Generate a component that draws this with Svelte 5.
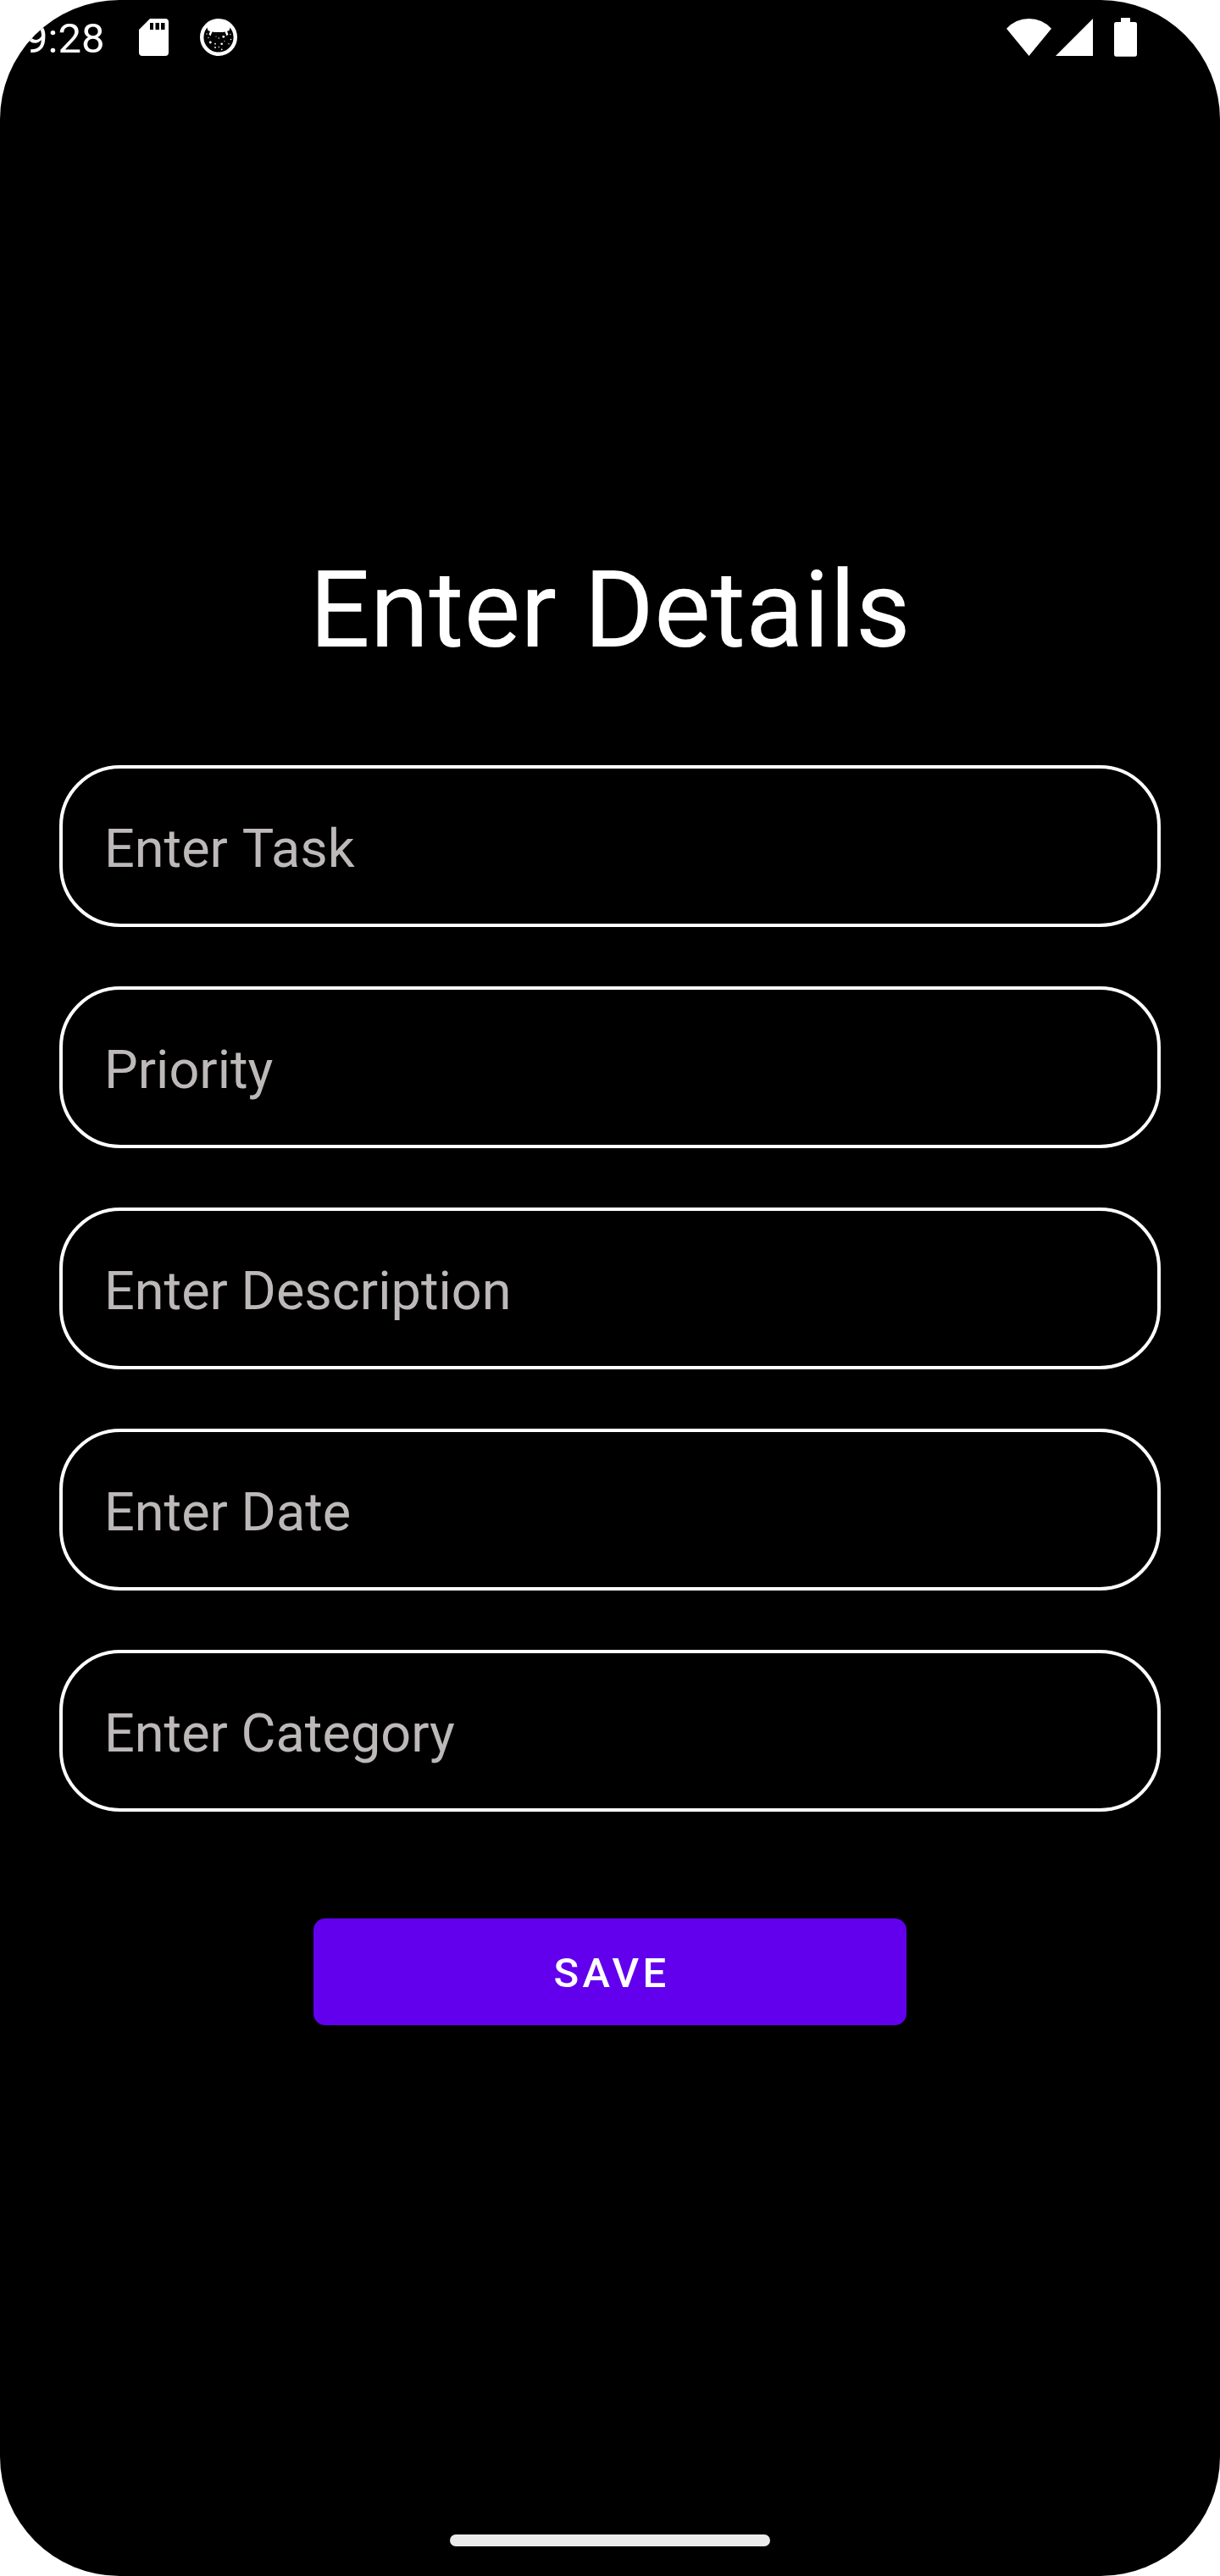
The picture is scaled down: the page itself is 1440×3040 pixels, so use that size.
<script>
  const fields = [
    { label: 'Enter Task', wide: true },
    { label: 'Priority' },
    { label: 'Enter Description' },
    { label: 'Enter Date' },
    { label: 'Enter Category' }
  ];
  const specks = [
    [8, 18, 0.7], [10, 22.5, 0.7], [12.3, 28, 1.4], [18, 29.7, 0.9], [22.3, 23, 0.7], [27.8, 21.3, 1.4],
    [19, 21, 0.6], [25.7, 29.7, 1.3], [34, 29.7, 0.7], [36.5, 24.5, 0.8], [29, 26.5, 0.6], [18, 34, 0.9],
    [25.7, 36.3, 0.9], [36, 18.5, 0.7], [22.3, 33.5, 0.7]
  ];
</script>

<div class="screen">
  <header class="status">
    <span class="clock">9:28</span>
    <svg class="sd" viewBox="0 0 35 44" aria-hidden="true">
      <path fill="#fff" fill-rule="evenodd" d="M13 0H31Q35 0 35 4V40Q35 44 31 44H4Q0 44 0 40V13ZM13 5V13H17V5ZM19.5 5V13H24V5ZM26 5V13H30.5V5Z" />
    </svg>
    <svg class="face" viewBox="0 0 44 44" aria-hidden="true">
      <circle cx="22" cy="22" r="19.8" fill="none" stroke="#fff" stroke-width="4.4" />
      <path fill="#fff" d="M8 9L13 4Q22 -1 31 4L36 9L34.5 14L32 15L33.5 18.5L31.5 20.5L29.5 15.5L27 16H17L14.5 15.5L12.5 20.5L10.5 18.5L12 15L9.5 14Z" />
      {#each specks as [x, y, r]}
        <circle cx={x} cy={y} {r} fill="#fff" />
      {/each}
    </svg>
    <span class="spacer"></span>
    <svg class="wifi" viewBox="0 0 53 44" aria-hidden="true">
      <path fill="#fff" d="M26.5 44L0 11.7Q11 0 26.5 0T53 11.7Z" />
    </svg>
    <svg class="signal" viewBox="0 0 44 44" aria-hidden="true"><path fill="#fff" d="M44 0V44H0Z" /></svg>
    <svg class="battery" viewBox="0 0 27 46" aria-hidden="true">
      <path fill="#fff" d="M8 0H19V5H24.5Q27 5 27 7.5V43Q27 45.7 24.5 45.7H2.5Q0 45.7 0 43V7.5Q0 5 2.5 5H8Z" />
    </svg>
  </header>

  <main>
    <h1>Enter Details</h1>
    <form onsubmit={(e) => e.preventDefault()}>
      {#each fields as { label, wide }}
        <input type="text" class:wide placeholder={label} aria-label={label} />
      {/each}
      <button type="submit">SAVE</button>
    </form>
  </main>

  <footer><div class="home"></div></footer>
</div>

<style>
  :global(body) {
    margin: 0;
    background: #fff;
  }
  .screen {
    box-sizing: border-box;
    width: 1440px;
    height: 3040px;
    display: flex;
    flex-direction: column;
    overflow: hidden;
    border-radius: 141px;
    background: #000;
    color: #fff;
    font-family: Roboto, sans-serif;
  }
  .status {
    display: flex;
    align-items: flex-start;
    box-sizing: border-box;
    height: 88px;
    padding: 22px 98px 0 29px;
  }
  .clock {
    width: 135px;
    padding-top: 1px;
    font-size: 49px;
    line-height: 46px;
  }
  .sd {
    width: 35px;
    height: 44px;
  }
  .face {
    width: 44px;
    height: 44px;
    margin-left: 37px;
  }
  .spacer {
    flex: 1;
  }
  .wifi {
    width: 53px;
    height: 44px;
  }
  .signal {
    width: 44px;
    height: 44px;
    margin-left: 5px;
  }
  .battery {
    width: 27px;
    height: 46px;
    margin: -1px 0 0 25px;
  }
  main {
    flex: 1;
    padding: 558px 70px 0;
  }
  h1 {
    margin: 0;
    height: 257px;
    font-size: 126px;
    line-height: 148px;
    font-weight: 400;
    text-align: center;
    word-spacing: 1px;
  }
  form {
    display: flex;
    flex-direction: column;
    gap: 70px;
  }
  input {
    box-sizing: border-box;
    width: 100%;
    height: 191px;
    padding: 6px 49px 0;
    border: 4px solid #fff;
    border-radius: 72px;
    outline: none;
    background: #000;
    color: #fff;
    font: 400 63px Roboto, sans-serif;
  }
  input::placeholder {
    color: #bdb9b9;
    opacity: 1;
  }
  .wide {
    word-spacing: 2.5px;
  }
  button {
    align-self: center;
    width: 700px;
    height: 126px;
    margin-top: 56px;
    padding: 3px 0 0 4px;
    border: 0;
    border-radius: 14px;
    background: #6200ee;
    color: #fff;
    font: 500 49px Roboto, sans-serif;
    letter-spacing: 4.375px;
  }
  footer {
    display: flex;
    justify-content: center;
    height: 49px;
  }
  .home {
    width: 378px;
    height: 14px;
    border-radius: 7px;
    background: #ebebeb;
  }
</style>
